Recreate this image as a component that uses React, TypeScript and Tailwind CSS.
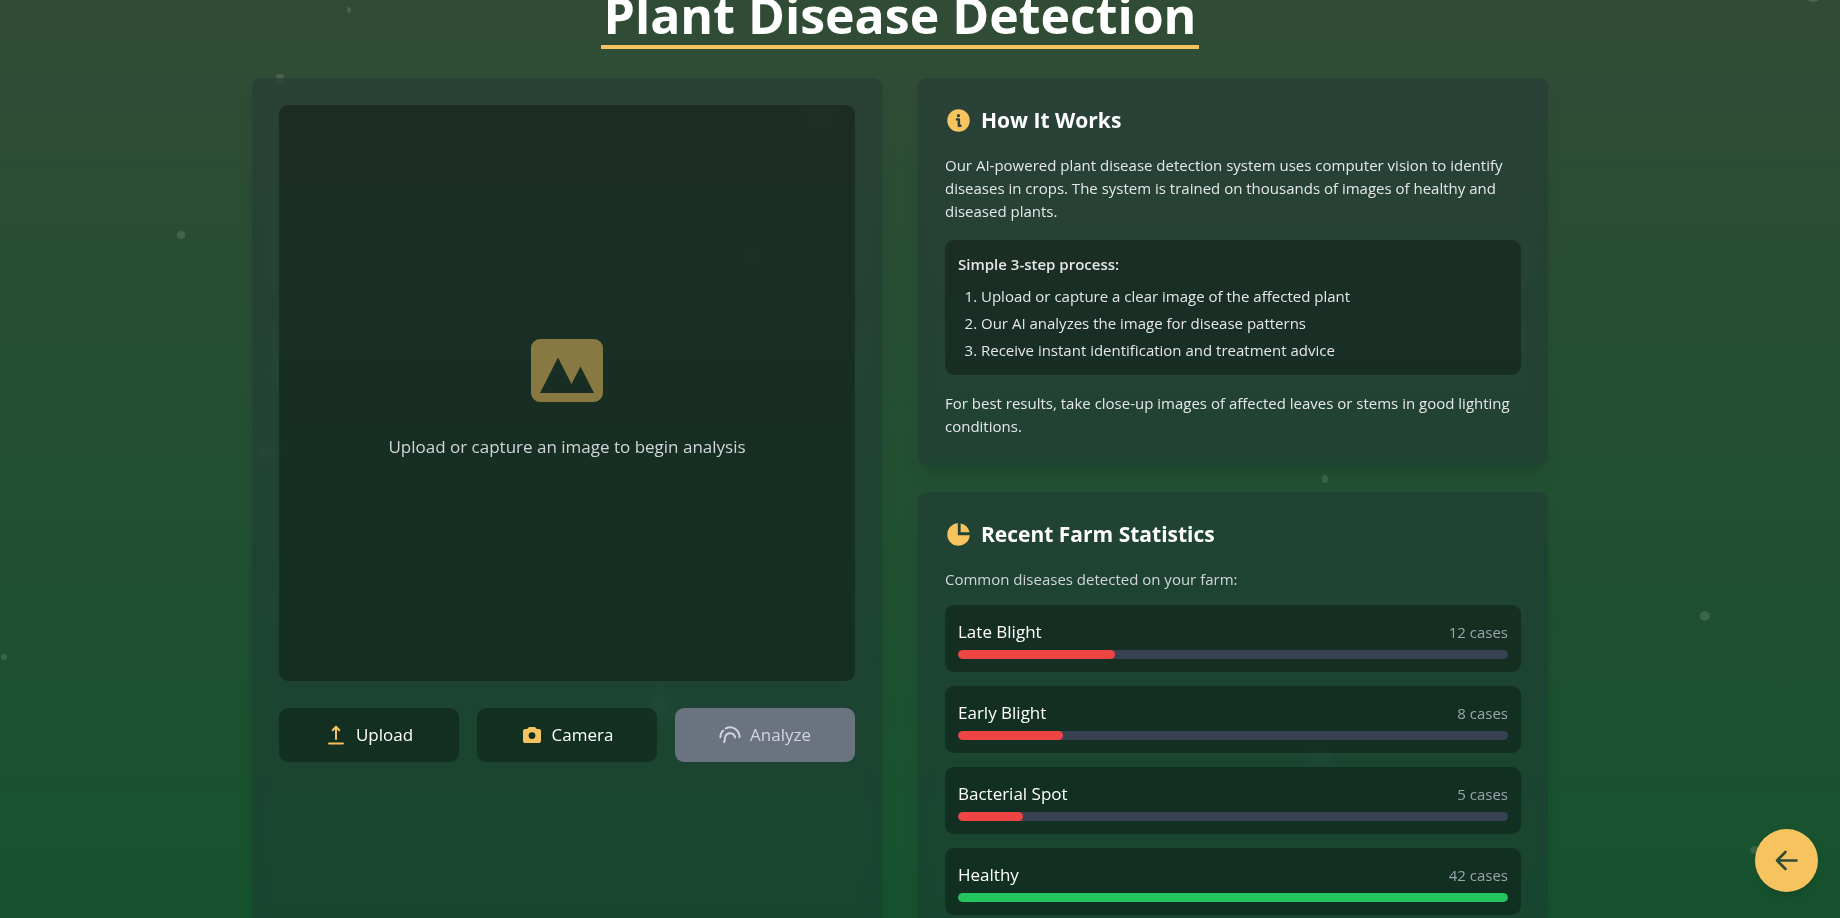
import type { ReactNode } from 'react';

type Disease = {
  name: string;
  cases: number;
  healthy?: boolean;
};

const diseases: Disease[] = [
  { name: 'Late Blight', cases: 12 },
  { name: 'Early Blight', cases: 8 },
  { name: 'Bacterial Spot', cases: 5 },
  { name: 'Healthy', cases: 42, healthy: true },
];

const maxCases = Math.max(...diseases.map((d) => d.cases));

// Floating pollen specks behind the cards
const particles = [
  { x: 349, y: 10, rx: 2, ry: 3 },
  { x: 280, y: 78, rx: 4, ry: 4 },
  { x: 181, y: 235, rx: 4, ry: 4 },
  { x: 4, y: 657, rx: 3, ry: 3 },
  { x: 1325, y: 479, rx: 3, ry: 4 },
  { x: 1705, y: 616, rx: 5, ry: 5 },
  { x: 1755, y: 850, rx: 5, ry: 4 },
  { x: 1813, y: -1, rx: 6, ry: 3 },
  { x: 659, y: 705, rx: 6, ry: 7 },
  { x: 755, y: 256, rx: 5, ry: 5 },
  { x: 265, y: 450, rx: 5, ry: 5 },
  { x: 820, y: 116, rx: 5, ry: 5 },
  { x: 1319, y: 755, rx: 5, ry: 5 },
];

function InfoIcon() {
  return (
    <svg className="size-[27px] text-[#f6c35f]" viewBox="0 0 24 24" aria-hidden="true">
      <circle cx="12" cy="12" r="10" fill="currentColor" />
      <circle cx="12" cy="7.7" r="1.4" fill="#2a4435" />
      <path d="M10.6 11h1.700v5.600h1.500" fill="none" stroke="#2a4435" strokeWidth="2.200" strokeLinecap="round" strokeLinejoin="round" />
    </svg>
  );
}

function PieIcon() {
  return (
    <svg className="size-[27px] text-[#f6c35f]" viewBox="0 0 24 24" fill="currentColor" aria-hidden="true">
      <path d="M11.4 2.02A10 10 0 1 0 21.98 12.6H11.4V2.02Z" />
      <path d="M13.9 2.2v7.9h7.9a10 10 0 0 0-7.9-7.9Z" />
    </svg>
  );
}

function PictureIcon() {
  return (
    <svg className="h-[63px] w-[72px] text-[#f6c35f] opacity-50" viewBox="0 0 16 14" fill="currentColor" aria-hidden="true">
      <path
        fillRule="evenodd"
        d="M2 0h12a2 2 0 0 1 2 2v10a2 2 0 0 1-2 2H2a2 2 0 0 1-2-2V2a2 2 0 0 1 2-2Zm0 12h12l-3-5.9-2 3.9-3-5.9L2 12Z"
      />
    </svg>
  );
}

function UploadIcon() {
  return (
    <svg className="size-[22px] text-[#f6c35f]" viewBox="0 0 22 22" fill="none" stroke="currentColor" strokeWidth="2" strokeLinecap="round" strokeLinejoin="round" aria-hidden="true">
      <path d="M11 15V3M7.700 6.200 11 2.800l3.300 3.400M4 19.500h14" />
    </svg>
  );
}

function CameraIcon() {
  return (
    <svg className="size-[22px] text-[#f6c35f]" viewBox="0 0 22 22" fill="currentColor" aria-hidden="true">
      <path
        fillRule="evenodd"
        d="M8.6 3h4.8c.5 0 .9.2 1.2.6L15.8 5H18a2 2 0 0 1 2 2v10a2 2 0 0 1-2 2H4a2 2 0 0 1-2-2V7a2 2 0 0 1 2-2h2.2l1.2-1.4c.3-.4.7-.6 1.2-.6ZM11 8.200a3.400 3.400 0 1 0 0 6.800 3.400 3.400 0 0 0 0-6.800Z"
      />
    </svg>
  );
}

function ScanIcon() {
  return (
    <svg className="size-[22px]" viewBox="0 0 22 22" fill="none" stroke="currentColor" strokeWidth="2" strokeLinecap="round" aria-hidden="true">
      <path d="M1.400 13.300c0-2.700 1-5 2.800-6.700" />
      <path d="M6.900 4.400c6-3.200 13.300.8 13.700 8.700" />
      <path d="M5.100 18c.9-2 .6-3.800 1.200-5.500 1.500-4.700 8.800-4.400 9.800.9" />
    </svg>
  );
}

function Card({ children }: { children: ReactNode }) {
  return <section className="rounded-[9px] bg-[#1f2937]/30 p-[27px] shadow-lg backdrop-blur-sm">{children}</section>;
}

function CardTitle({ icon, children }: { icon: ReactNode; children: ReactNode }) {
  return (
    <h2 className="mb-[18px] flex items-center gap-[9px] text-[21px] leading-[31px] font-bold">
      {icon}
      {children}
    </h2>
  );
}

function StatRow({ name, cases, healthy }: Disease) {
  return (
    <li className="rounded-[9px] bg-black/30 p-[13px]">
      <div className="flex items-center justify-between leading-7">
        <span className="text-[17px]">{name}</span>
        <span className="text-[15px] text-[#9ca3af]">{cases} cases</span>
      </div>
      <div className="mt-1 h-[9px] overflow-hidden rounded-full bg-[#374151]">
        <div
          className={healthy ? 'h-full rounded-full bg-[#22c55e]' : 'h-full rounded-full bg-[#ef4444]'}
          style={{ width: `${(cases / maxCases) * 100}%` }}
        />
      </div>
    </li>
  );
}

export default function App() {
  return (
    <div className="relative min-h-screen overflow-hidden bg-[linear-gradient(to_bottom,#314c36,#14532d)] pr-10 font-['Open_Sans','Noto_Sans',sans-serif] text-white">
      {/* Particles */}
      <svg className="absolute inset-0 h-full w-full" aria-hidden="true">
        {particles.map((p) => (
          <ellipse key={`${p.x}-${p.y}`} cx={p.x} cy={p.y} rx={p.rx} ry={p.ry} fill="#fff" fillOpacity="0.12" />
        ))}
      </svg>

      <div className="relative mx-auto max-w-[1296px] pb-[27px]">
        {/* Title */}
        <header className="flex h-[78px] items-end justify-center pb-[29px]">
          <h1 className="border-b-4 border-[#f6c35f] px-[3px] pb-[3px] text-[50px] leading-[54px] font-bold whitespace-nowrap">
            Plant Disease Detection
          </h1>
        </header>

        <main className="grid grid-cols-2 gap-9">
          {/* Upload panel */}
          <Card>
            <div className="flex aspect-square flex-col items-center justify-center gap-[31px] rounded-[9px] bg-black/30 pt-[14px]">
              <PictureIcon />
              <p className="text-[17px] leading-7 text-[#d1d5db]">Upload or capture an image to begin analysis</p>
            </div>
            <div className="mt-[27px] grid grid-cols-3 gap-[18px]">
              <button type="button" className="flex h-[54px] items-center justify-center gap-[9px] rounded-[9px] bg-black/30 text-[17px]">
                <UploadIcon />
                Upload
              </button>
              <button type="button" className="flex h-[54px] items-center justify-center gap-[9px] rounded-[9px] bg-black/30 text-[17px]">
                <CameraIcon />
                Camera
              </button>
              <button
                type="button"
                disabled
                className="flex h-[54px] items-center justify-center gap-[9px] rounded-[9px] bg-[#6b7280] text-[17px] text-[#d1d5db]"
              >
                <ScanIcon />
                Analyze
              </button>
            </div>
          </Card>

          <div className="flex flex-col gap-[27px]">
            {/* How it works */}
            <Card>
              <CardTitle icon={<InfoIcon />}>How It Works</CardTitle>
              <div className="flex flex-col gap-[17px] text-[15px] leading-[23px] text-[#e5e7eb]">
                <p>
                  Our AI-powered plant disease detection system uses computer vision to identify diseases in crops. The
                  system is trained on thousands of images of healthy and diseased plants.
                </p>
                <div className="rounded-[9px] bg-black/30 p-[13px]">
                  <h3 className="mb-[9px] font-semibold">Simple 3-step process:</h3>
                  <ol className="list-decimal space-y-1 pl-[23px]">
                    <li>Upload or capture a clear image of the affected plant</li>
                    <li>Our AI analyzes the image for disease patterns</li>
                    <li>Receive instant identification and treatment advice</li>
                  </ol>
                </div>
                <p>For best results, take close-up images of affected leaves or stems in good lighting conditions.</p>
              </div>
            </Card>

            {/* Farm statistics */}
            <Card>
              <CardTitle icon={<PieIcon />}>Recent Farm Statistics</CardTitle>
              <p className="mb-[14px] text-[15px] leading-[23px] text-[#d1d5db]">Common diseases detected on your farm:</p>
              <ul className="flex flex-col gap-[14px]">
                {diseases.map((d) => (
                  <StatRow key={d.name} {...d} />
                ))}
              </ul>
            </Card>
          </div>
        </main>
      </div>

      {/* Back button */}
      <a
        href="#"
        aria-label="Back"
        className="fixed right-[22px] bottom-[26px] flex size-[63px] items-center justify-center rounded-full bg-[#f6c35f] text-[#304c35] shadow-lg"
      >
        <svg className="size-[27px]" viewBox="0 0 27 27" fill="none" stroke="currentColor" strokeWidth="2.6" strokeLinecap="round" strokeLinejoin="round" aria-hidden="true">
          <path d="M23.500 13.500H4M12.500 5 4 13.500l8.500 8.500" />
        </svg>
      </a>
    </div>
  );
}
